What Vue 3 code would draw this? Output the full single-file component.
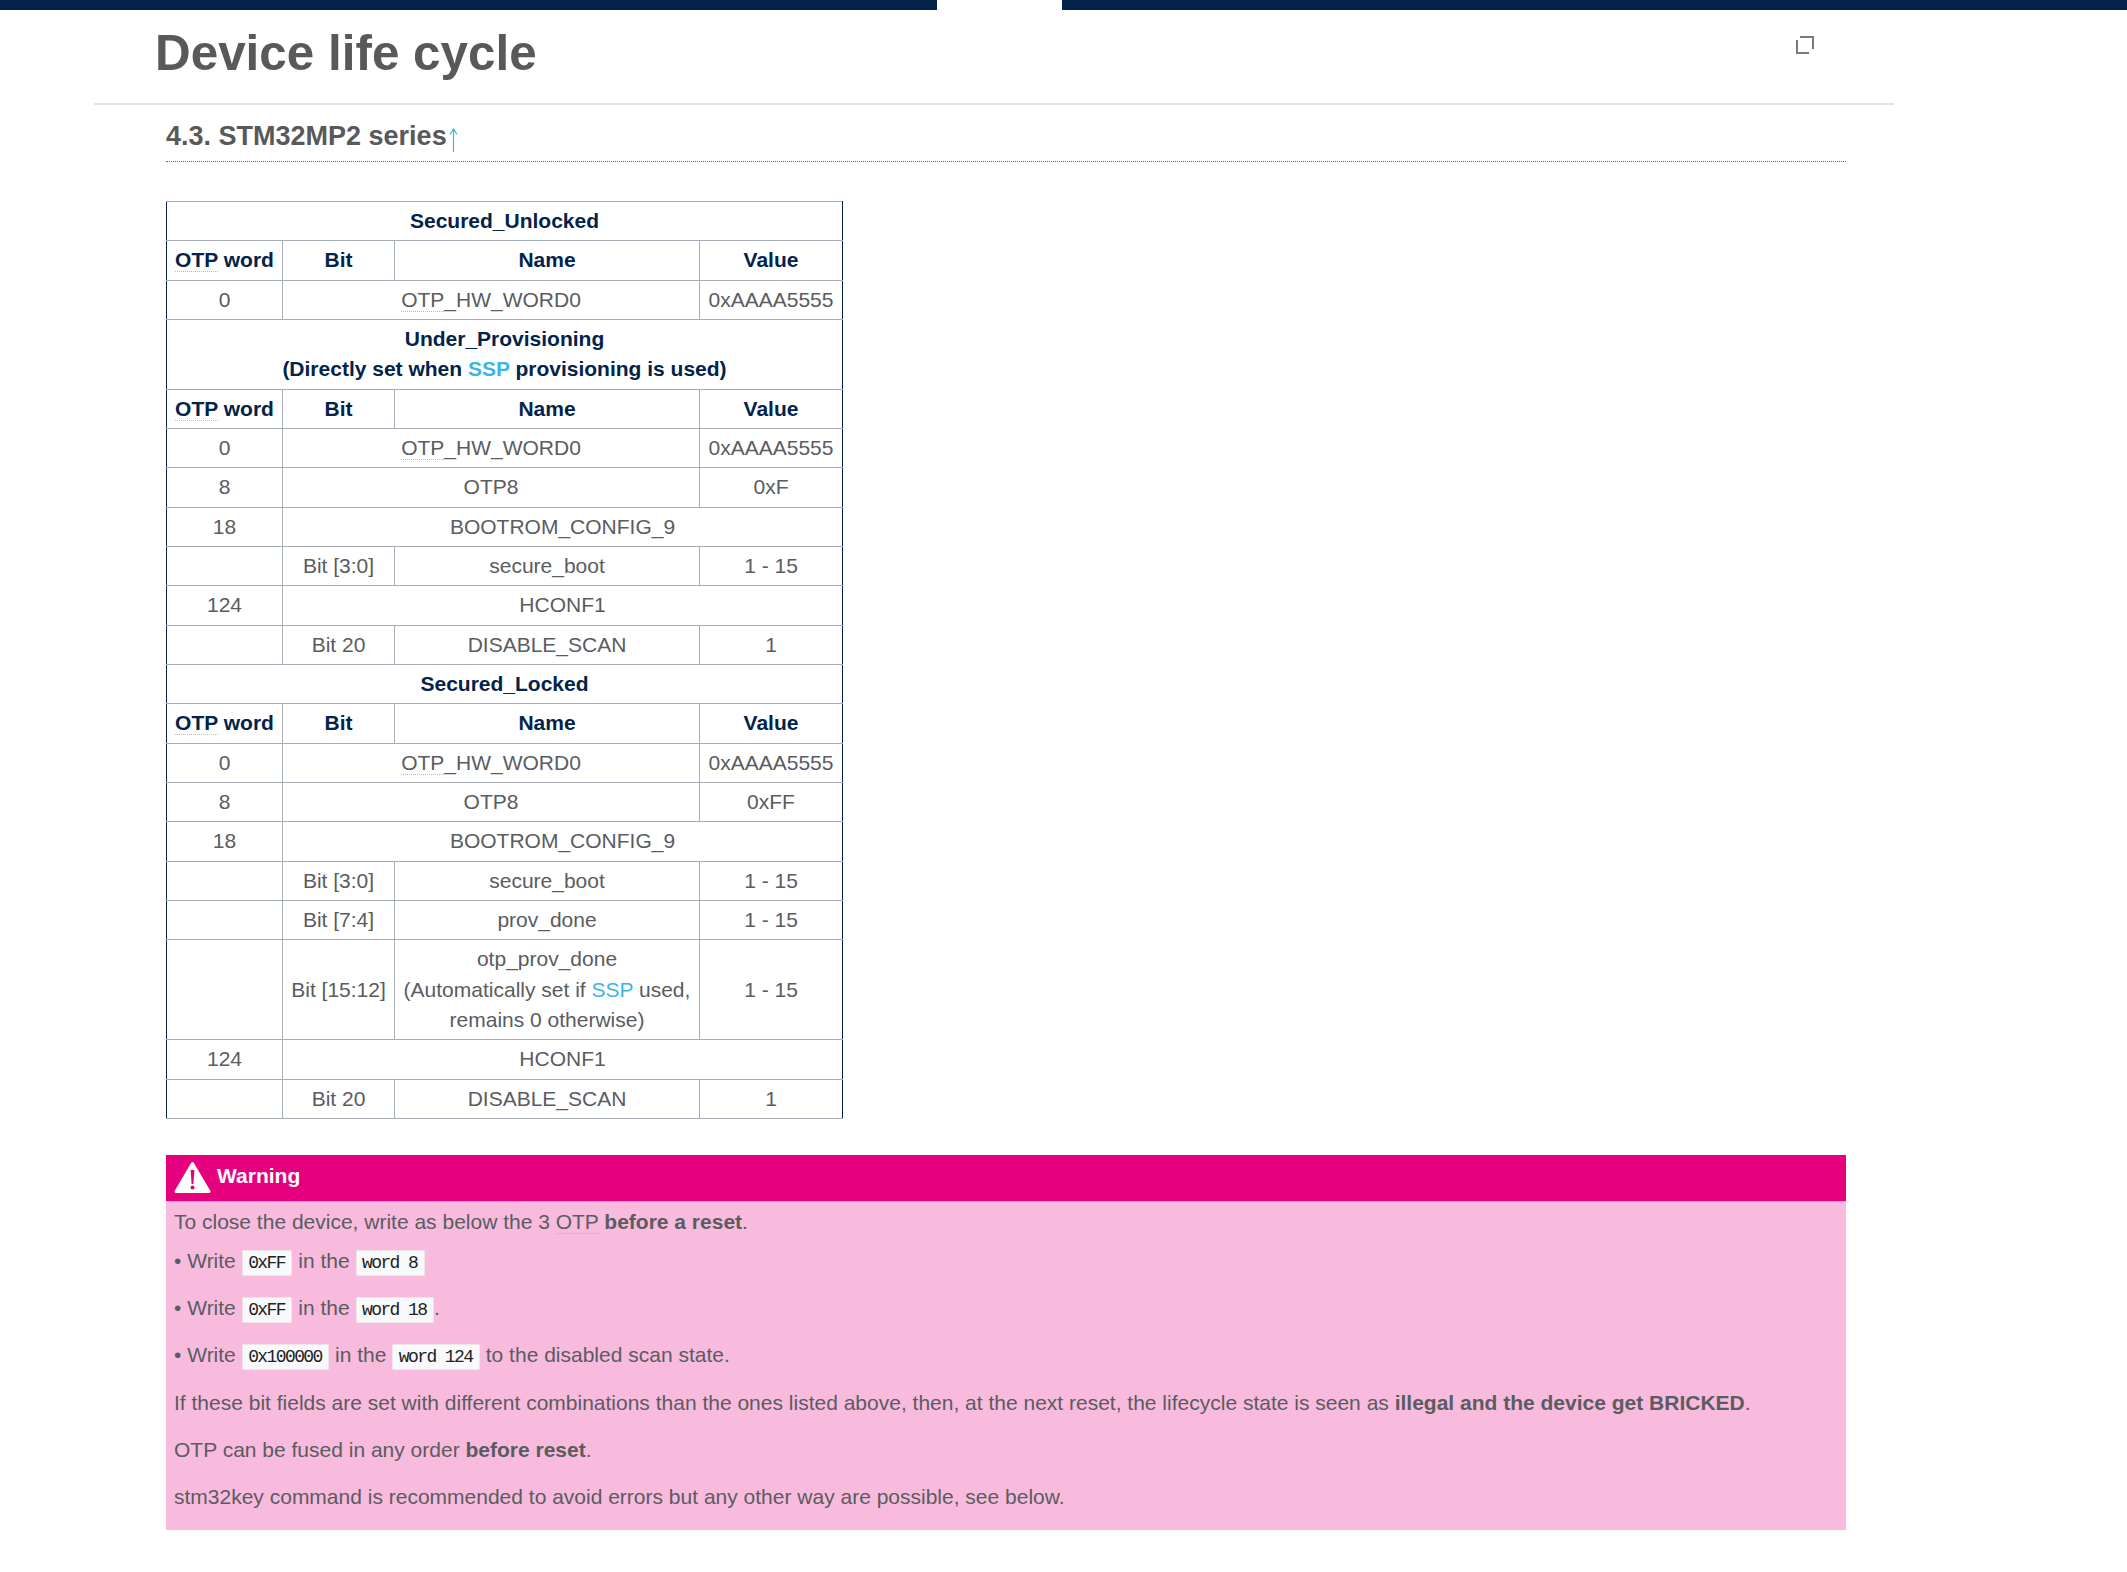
<script setup>
const hdr = { cells: [['OTP word', 1, 'otp'], ['Bit', 1], ['Name', 1], ['Value', 1]], header: true }
const otp0 = [['0', 1], ['OTP_HW_WORD0', 2, 'otp'], ['0xAAAA5555', 1]]
const sec1 = [
  { title: 'Secured_Unlocked' },
  hdr,
  { cells: otp0 },
  { title: 'Under_Provisioning', sub: true },
  hdr,
  { cells: otp0 },
  { cells: [['8', 1], ['OTP8', 2], ['0xF', 1]] },
  { cells: [['18', 1], ['BOOTROM_CONFIG_9', 3]] },
  { cells: [['', 1], ['Bit [3:0]', 1], ['secure_boot', 1], ['1 - 15', 1]] },
  { cells: [['124', 1], ['HCONF1', 3]] },
  { cells: [['', 1], ['Bit 20', 1], ['DISABLE_SCAN', 1], ['1', 1]] },
  { title: 'Secured_Locked' },
  hdr,
  { cells: otp0 },
  { cells: [['8', 1], ['OTP8', 2], ['0xFF', 1]] },
  { cells: [['18', 1], ['BOOTROM_CONFIG_9', 3]] },
  { cells: [['', 1], ['Bit [3:0]', 1], ['secure_boot', 1], ['1 - 15', 1]] },
  { cells: [['', 1], ['Bit [7:4]', 1], ['prov_done', 1], ['1 - 15', 1]] },
  { prov: true },
  { cells: [['124', 1], ['HCONF1', 3]] },
  { cells: [['', 1], ['Bit 20', 1], ['DISABLE_SCAN', 1], ['1', 1]] }
]
</script>

<template>
  <div class="page">
    <div class="topbar"><div class="seg seg-a"></div><div class="seg seg-b"></div></div>
    <div class="head">
      <h1>Device life cycle</h1>
      <svg class="expand" width="18" height="18" viewBox="0 0 18 18" fill="none" stroke="#77797c" stroke-width="2">
        <path d="M1 4V17H13" />
        <path d="M4 1H17V13" />
      </svg>
    </div>
    <div class="content">
      <h2>4.3. STM32MP2 series<svg class="up" width="9" height="24" viewBox="0 0 9 24" fill="none" stroke="#3cb4e6" stroke-width="1.2"><path d="M4.5 24V1M1 6.5L4.5 1L8 6.5" /></svg></h2>
      <table>
        <colgroup><col class="c1" /><col class="c2" /><col class="c3" /><col class="c4" /></colgroup>
        <tbody>
          <tr v-for="(r, i) in sec1" :key="i">
            <th v-if="r.title" colspan="4">
              {{ r.title }}
              <template v-if="r.sub"><br />(Directly set when <a>SSP</a> provisioning is used)</template>
            </th>
            <template v-else-if="r.prov">
              <td></td>
              <td>Bit [15:12]</td>
              <td>otp_prov_done<br />(Automatically set if <a>SSP</a> used,<br />remains 0 otherwise)</td>
              <td>1 - 15</td>
            </template>
            <template v-else-if="r.header">
              <th v-for="c in r.cells" :key="c[0]"><span v-if="c[2]" class="gl">OTP</span>{{ c[2] ? c[0].slice(3) : c[0] }}</th>
            </template>
            <template v-else>
              <td v-for="(c, j) in r.cells" :key="j" :colspan="c[1]"><span v-if="c[2]" class="gl">OTP</span>{{ c[2] ? c[0].slice(3) : c[0] }}</td>
            </template>
          </tr>
        </tbody>
      </table>
      <div class="warn">
        <div class="warn-head">
          <svg width="37" height="33" viewBox="0 0 37 33">
            <path d="M18.5 2.5 L35 30.5 H2 Z" fill="#fff" stroke="#fff" stroke-width="3" stroke-linejoin="round" />
            <path d="M16.6 9 H20.4 L19.4 23 H17.6 Z" fill="#e6007e" />
            <circle cx="18.5" cy="26.5" r="2" fill="#e6007e" />
          </svg>
          <span class="warn-title">Warning</span>
        </div>
        <div class="warn-body">
          <p class="first">To close the device, write as below the 3 <span class="gl2">OTP</span> <b>before a reset</b>.</p>
          <p>• Write <code>0xFF</code> in the <code>word 8</code></p>
          <p>• Write <code>0xFF</code> in the <code>word 18</code>.</p>
          <p>• Write <code>0x100000</code> in the <code>word 124</code> to the disabled scan state.</p>
          <p>If these bit fields are set with different combinations than the ones listed above, then, at the next reset, the lifecycle state is seen as <b>illegal and the device get BRICKED</b>.</p>
          <p><span>OTP</span> can be fused in any order <b>before reset</b>.</p>
          <p>stm32key command is recommended to avoid errors but any other way are possible, see below.</p>
        </div>
      </div>
    </div>
  </div>
</template>

<style>
html, body { margin: 0; background: #fff; }
</style>

<style scoped>
.page { width: 2127px; height: 1572px; overflow: hidden; font-family: "Liberation Sans", Arial, sans-serif; font-size: 21px; color: #5a5c5f; background: #fff; }
.topbar { display: flex; height: 10px; }
.seg { background: #03234b; }
.seg-a { width: 937px; }
.seg-b { margin-left: 125px; flex: 1; }
.head { margin-left: 94px; width: 1800px; height: 93px; border-bottom: 2px solid #e3e3e3; display: flex; justify-content: space-between; align-items: flex-start; }
h1 { margin: 0 0 0 61px; font-size: 49.4px; line-height: 85px; font-weight: 700; color: #58595b; }
.expand { margin: 26px 80px 0 0; }
.content { margin-left: 166px; width: 1680px; }
h2 { margin: 0; height: 56px; line-height: 62px; font-size: 27px; font-weight: 700; color: #58595b; border-bottom: 1px dotted #666; }
.up { margin-left: 2px; vertical-align: -7px; }
table { border-collapse: collapse; table-layout: fixed; width: 676px; margin-top: 39px; line-height: 30.33px; text-align: center; border-left: 1px solid #03234b; border-right: 1px solid #03234b; }
.c1 { width: 116px; } .c2 { width: 112px; } .c3 { width: 305px; } .c4 { width: 143px; }
td, th { border: 1px solid #a6adb7; padding: 4px 7px; white-space: nowrap; }
td:first-child, th:first-child { border-left-color: #03234b; }
td:last-child, th:last-child { border-right-color: #03234b; }
th { color: #03234b; font-weight: 700; }
a { color: #3cb4e6; }
.gl { border-bottom: 1px dotted #b9b4e6; }
.gl2 { border-bottom: 1px dotted #7cc3f0; }
.warn { margin-top: 36px; height: 375px; background: #f8bbdd; }
.warn-head { height: 46px; background: #e6007e; border-bottom: 1px solid #e8a2c9; color: #fff; font-weight: 700; display: flex; align-items: center; gap: 6px; padding-left: 8px; }
.warn-title { margin-bottom: 4px; }
.warn-body { padding: 5px 8px 0; line-height: 30px; }
p { margin: 0 0 17.3px; }
p.first { margin-bottom: 9px; }
code { line-height: 1; font-family: "Liberation Mono", monospace; font-size: 18px; letter-spacing: -1.6px; color: #222; background: #f7f9fb; border: 1px solid #eee4ea; border-radius: 2px; padding: 2px 6.5px 2px 5.5px; }
b { font-weight: 700; }
</style>
